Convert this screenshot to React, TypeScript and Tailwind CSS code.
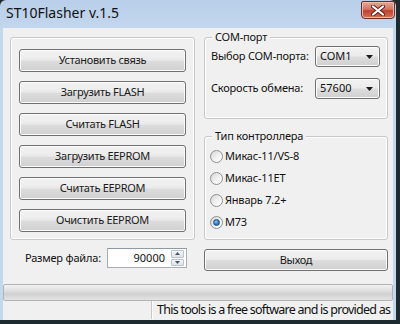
import { ReactNode } from 'react';

const btn =
  'flex items-center justify-center whitespace-nowrap rounded-[3px] border border-[#707070] bg-[linear-gradient(#f2f2f2,#ebebeb_48%,#dddddd_52%,#cfcfcf)] shadow-[inset_0_0_0_1px_#fcfcfc] text-[11px] tracking-[-0.3px] text-[#1a1a1a]';

const label = 'whitespace-nowrap text-[11px] tracking-[-0.2px]';

function Button({ children, className = '' }: { children: ReactNode; className?: string }) {
  return <div className={`${btn} ${className}`}>{children}</div>;
}

function GroupLabel({ children }: { children: ReactNode }) {
  return (
    <span className={`-mt-[9px] ml-[7px] self-start bg-[#f0f0f0] px-[3px] leading-[16px] ${label}`}>
      {children}
    </span>
  );
}

function Combo({ value }: { value: string }) {
  return (
    <div className="flex h-[21px] w-[65px] shrink-0 items-center justify-between rounded-[3px] border border-[#707070] bg-[linear-gradient(#f2f2f2,#ebebeb_48%,#dddddd_52%,#cfcfcf)] pl-[4px] pr-[6px] text-[11px] shadow-[inset_0_0_0_1px_#fcfcfc]">
      <span>{value}</span>
      <svg width="7" height="4" viewBox="0 0 7 4">
        <path d="M0 0h7L3.5 4z" fill="#1a1a1a" />
      </svg>
    </div>
  );
}

function Radio({ label: text, checked = false }: { label: string; checked?: boolean }) {
  return (
    <div className="flex h-[22px] items-center gap-[2px] pl-[5px]">
      <div className="flex h-[13px] w-[13px] items-center justify-center rounded-full border border-[#8e8f8f] bg-[linear-gradient(135deg,#d6d6d6,#f4f4f4_60%,#ffffff)]">
        {checked && (
          <div className="h-[7px] w-[7px] rounded-full border border-[#1c4f82] bg-[radial-gradient(circle_at_40%_35%,#8fc4f0,#2a73b8_60%,#1a4f86)]" />
        )}
      </div>
      <span className={label}>{text}</span>
    </div>
  );
}

export default function App() {
  return (
    <div className="h-[324px] w-[400px] overflow-hidden bg-[#1d2b30] font-['Noto_Sans',sans-serif] text-[#111]">
      <div className="flex h-[320px] w-[396px] flex-col rounded-t-[6px] bg-[linear-gradient(#b9cfe9,#c3d7ee_30px,#c3d7ee)]">
        {/* title bar */}
        <div className="flex h-[28px] shrink-0 items-start justify-between">
          <span className="ml-[6px] mt-[4px] text-[14px] leading-[18px] text-[#111]">ST10Flasher v.1.5</span>
          <div className="mr-[1px] mt-[1px] flex h-[18px] w-[34px] items-center justify-center rounded-b-[4px] rounded-t-[2px] border border-[#6e2a24] bg-[linear-gradient(#e8a797,#d47563_45%,#c0402e_55%,#d2745a)] shadow-[inset_0_0_0_1px_#f0b8aa]">
            <svg width="14" height="11" viewBox="0 0 14 11">
              <path d="M2 1.5l10 8M12 1.5l-10 8" stroke="#5a1f18" strokeWidth="4" strokeLinecap="round" />
              <path d="M2 1.5l10 8M12 1.5l-10 8" stroke="#ffffff" strokeWidth="2.2" strokeLinecap="round" />
            </svg>
          </div>
        </div>

        {/* client */}
        <div className="mx-[3px] flex flex-1 flex-col bg-[#f0f0f0]">
          <div className="flex h-[256px] shrink-0 gap-[9px] pl-[7px] pt-[9px]">
            {/* left column */}
            <div className="flex w-[185px] flex-col">
              <div className="flex h-[203px] flex-col gap-[9px] rounded-[3px] border border-[#c8c8c8] px-[8px] pt-[11px] shadow-[inset_0_0_0_1px_#ffffff]">
                <Button className="h-[23px]">Установить связь</Button>
                <Button className="h-[23px]">Загрузить FLASH</Button>
                <Button className="h-[23px]">Считать FLASH</Button>
                <Button className="h-[23px]">Загрузить EEPROM</Button>
                <Button className="h-[23px]">Считать EEPROM</Button>
                <Button className="h-[23px]">Очистить EEPROM</Button>
              </div>
              <div className="mt-[8px] flex items-center">
                <span className={`ml-[15px] w-[82px] ${label}`}>Размер файла:</span>
                <div className="flex h-[20px] w-[80px] items-center border border-[#abadb3] border-t-[#8e9aa5] bg-white">
                  <span className="flex-1 pr-[6px] text-right text-[11px]">90000</span>
                  <div className="mr-[2px] flex h-[16px] w-[13px] flex-col gap-[1px]">
                    <div className="flex flex-1 items-center justify-center rounded-[1px] border border-[#b8c4d0] bg-[linear-gradient(#f4f6f8,#dde4ec)]">
                      <svg width="5" height="3" viewBox="0 0 5 3">
                        <path d="M0 3h5L2.5 0z" fill="#4a5560" />
                      </svg>
                    </div>
                    <div className="flex flex-1 items-center justify-center rounded-[1px] border border-[#b8c4d0] bg-[linear-gradient(#f4f6f8,#dde4ec)]">
                      <svg width="5" height="3" viewBox="0 0 5 3">
                        <path d="M0 0h5L2.5 3z" fill="#4a5560" />
                      </svg>
                    </div>
                  </div>
                </div>
              </div>
            </div>

            {/* right column */}
            <div className="flex w-[184px] flex-col">
              <div className="flex h-[82px] flex-col rounded-[3px] border border-[#c8c8c8] shadow-[inset_0_0_0_1px_#ffffff]">
                <GroupLabel>COM-порт</GroupLabel>
                <div className="mt-[1px] flex items-center justify-between pl-[6px] pr-[7px]">
                  <span className={label}>Выбор COM-порта:</span>
                  <Combo value="COM1" />
                </div>
                <div className="mt-[11px] flex items-center justify-between pl-[6px] pr-[7px]">
                  <span className={label}>Скорость обмена:</span>
                  <Combo value="57600" />
                </div>
              </div>
              <div className="mt-[17px] flex h-[104px] flex-col rounded-[3px] border border-[#c8c8c8] shadow-[inset_0_0_0_1px_#ffffff]">
                <GroupLabel>Тип контроллера</GroupLabel>
                <div className="mt-[1px] flex flex-col">
                  <Radio label="Микас-11/VS-8" />
                  <Radio label="Микас-11ET" />
                  <Radio label="Январь 7.2+" />
                  <Radio label="M73" checked />
                </div>
              </div>
              <Button className="mt-[9px] h-[22px]">Выход</Button>
            </div>
          </div>

          {/* progress bar */}
          <div className="h-[17px] shrink-0 rounded-[2px] border border-[#b4b4b4] bg-[linear-gradient(#f2f2f2,#dedede_40%,#d0d0d0_60%,#e4e4e4)]" />

          {/* status bar */}
          <div className="flex h-[18px] shrink-0 items-center overflow-hidden whitespace-nowrap">
            <div className="h-full w-[149px] shrink-0 border-r border-[#c8c8c8] shadow-[1px_0_0_#ffffff]" />
            <span className="ml-[5px] text-[12.5px] leading-[18px] tracking-[-0.75px]">This tools is a free software and is provided as</span>
          </div>
        </div>
      </div>
    </div>
  );
}
